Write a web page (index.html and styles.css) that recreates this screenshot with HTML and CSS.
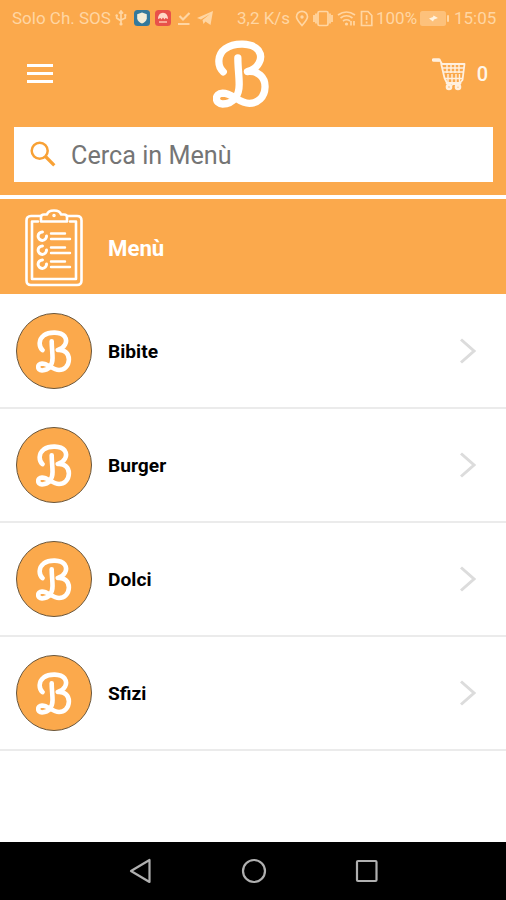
FILE: index.html
```
<!DOCTYPE html>
<html lang="it">
  <head>
    <meta charset="utf-8" />
    <title>Menù</title>
    <link rel="stylesheet" href="styles.css">
  </head>

  <body>
    <svg class="defs" width="0" height="0">
      <symbol id="logo" viewBox="14 12 172 203">
        <path d="M45 107C25 88 28 54 51 37C78 18 132 18 151 42C168 66 150 98 118 106C150 103 172 123 171 153C170 185 148 202 124 202C92 202 72 171 43 171C18 172 18 203 43 204C78 203 93 176 93 145C93 118 89 95 89 65" fill="none" stroke="#fff" stroke-width="22" stroke-linecap="round" stroke-linejoin="round" />
      </symbol>
      <symbol id="arrow" viewBox="0 0 16 26">
        <path d="M1 1.5L14 13L1 24.5" fill="none" stroke="#dcdcdc" stroke-width="3" />
      </symbol>
    </svg>

    <div id="status">
      <div class="status_side">
        <span class="operator">Solo Ch. SOS</span>
        <svg class="usb" width="12" height="16" viewBox="0 0 12 16">
          <path d="M6 2V14M6 11L1.7 8V5M6 10L10.3 8V4.5M4 3.5L6 1L8 3.5" />
          <circle class="solid" cx="6" cy="14" r="1.6" /><circle class="solid" cx="1.7" cy="5.5" r="1.2" /><path d="M9.3 5H11.3" />
        </svg>
        <svg class="shield" width="16" height="16" viewBox="0 0 16 16">
          <rect width="16" height="16" rx="3.5" fill="#34799b" />
          <path d="M8 2.6L12.8 4.3V8.5C12.5 11 10.5 12.5 8 13.5C5.5 12.5 3.5 11 3.2 8.5V4.3Z" fill="#f5eed7" />
        </svg>
        <svg class="huawei" width="16" height="16" viewBox="0 0 16 16">
          <rect width="16" height="16" rx="3.5" fill="#e8514a" />
          <path d="M3 9C3 5 5 3 8 2.7C11 3 13 5 13 9L10.5 8L9.5 9.5L8 7.5L6.5 9.5L5.5 8Z" fill="#ffd9c8" />
          <path class="line" d="M4 12H12" />
        </svg>
        <svg class="check" width="14" height="15" viewBox="0 0 14 15">
          <path d="M2.5 5L6 8.5L12.5 2M1 13H12.5" />
        </svg>
        <svg class="plane" width="16" height="14" viewBox="0 0 16 14">
          <path class="solid" d="M0 7L16 0L13.5 14L8.5 10.5L6.5 13L5.5 9L13 3L4 8.5Z" />
        </svg>
      </div>
      <div class="status_side">
        <span class="speed">3,2 K/s</span>
        <svg class="pin" width="14" height="17" viewBox="0 0 14 17">
          <path d="M7 15.5C4 12 1.5 9.5 1.5 6.8A5.5 5.5 0 0 1 12.5 6.8C12.5 9.5 10 12 7 15.5Z" />
          <circle class="solid" cx="7" cy="7" r="1.7" />
        </svg>
        <svg class="vibrate" width="20" height="17" viewBox="0 0 20 17">
          <rect x="5" y="1.5" width="10" height="14" rx="1.5" /><path d="M3 3.5V13.5M17 3.5V13.5M1 5V12M19 5V12" />
        </svg>
        <svg class="wifi" width="19" height="17" viewBox="0 0 19 17">
          <path d="M1 5Q9.5-1 18 5M3.5 8Q9.5 3.5 15.5 8M6 11Q9.5 8.5 13 11" />
          <circle class="solid" cx="9.5" cy="14" r="1.6" /><path d="M14 11V15.5M17 15.5V11" />
        </svg>
        <svg class="sim" width="13" height="17" viewBox="0 0 13 17">
          <path d="M1.5 1.5H8L11.8 5.5V15.5H1.5Z" /><path d="M6.6 5V10M6.6 11.5V13.5" />
        </svg>
        <span class="percent">100%</span>
        <svg class="battery" width="29" height="15" viewBox="0 0 29 15">
          <rect class="solid" width="26" height="15" rx="2.5" opacity=".55" /><rect class="solid" x="27" y="4" width="2" height="7" rx="1" />
          <path d="M9 7.5L13 6L13.5 4.5L18 7L14 8.5L13 10.5Z" fill="#fff3df" />
        </svg>
        <span class="clock">15:05</span>
      </div>
    </div>

    <div id="head">
      <svg class="burger" width="26" height="20" viewBox="0 0 26 20">
        <path d="M0 1.5H26M0 9.5H26M0 17.5H26" stroke="#fff" stroke-width="2.8" />
      </svg>
      <svg class="brand" width="57" height="68"><use href="#logo" /></svg>
      <div class="cart">
        <svg width="35" height="33" viewBox="0 0 35 33" fill="none" stroke="#fff0df">
          <path d="M1 2L8 2.5L10 6H32.5L30.5 22L28 25H15L12.5 20L9 5" stroke-width="1.8" stroke-linejoin="round" />
          <path d="M1.500 2H7" stroke-width="3.4" stroke-linecap="round" />
          <path d="M11 10H32M12 14H31.500M12.500 20.500H30.500M15 6V15M19 6V15M23 6V15M27 6V15M16 16V24M20 16V24M24 16V24M27.500 16V24" stroke-width="1.4" />
          <path d="M14 25L19 28L22 25L26 28L29 25" stroke-width="1.6" />
          <circle cx="17" cy="29" r="2" stroke-width="2.6" /><circle cx="26" cy="29" r="2" stroke-width="2.6" />
        </svg>
        <span>0</span>
      </div>
    </div>

    <form id="search" action="">
      <svg width="26" height="26" viewBox="0 0 26 26">
        <g fill="none" stroke="#f8a135"><circle cx="9.7" cy="9.7" r="8" stroke-width="2.5" /><path d="M15.5 15.5L24.3 24.3" stroke-width="3.2" /></g>
      </svg>
      <input class="query" placeholder="Cerca in Menù" autocomplete="off" />
    </form>

    <div id="title">
      <svg width="58" height="78" viewBox="0 0 58 78" fill="none" stroke="#fff" stroke-width="2.6" stroke-linejoin="round" stroke-linecap="round">
        <path d="M16 7H6Q1.5 7 1.5 11.5V71.5Q1.5 76 6 76H52Q56.5 76 56.5 71.5V11.5Q56.5 7 52 7H42" />
        <path d="M13 12.5H7V70H51V12.5H45" />
        <path d="M16 12.5V8Q16 5.5 19 5.5H22Q23 1.5 29 1.5Q35 1.5 36 5.5H39Q42 5.5 42 8V12.5Z" />
        <circle cx="29" cy="6.5" r="1" stroke-width="1.5" />
        <path d="M26 24.5H40M26 30H45M26 38.5H40M26 44H45M26 52.5H40M26 58H45" stroke-width="2.4" />
        <path d="M17.5 23A4.2 4.2 0 1 0 21.5 27M17.5 37A4.2 4.2 0 1 0 21.5 41M17.5 51A4.2 4.2 0 1 0 21.5 55" stroke-width="3" />
      </svg>
      <span>Menù</span>
    </div>

    <ul id="list">
      <li>
        <div class="avatar"><svg width="36" height="43"><use href="#logo" /></svg></div>
        <span>Bibite</span>
        <svg class="arrow" width="16" height="26"><use href="#arrow" /></svg>
      </li>
      <li>
        <div class="avatar"><svg width="36" height="43"><use href="#logo" /></svg></div>
        <span>Burger</span>
        <svg class="arrow" width="16" height="26"><use href="#arrow" /></svg>
      </li>
      <li>
        <div class="avatar"><svg width="36" height="43"><use href="#logo" /></svg></div>
        <span>Dolci</span>
        <svg class="arrow" width="16" height="26"><use href="#arrow" /></svg>
      </li>
      <li>
        <div class="avatar"><svg width="36" height="43"><use href="#logo" /></svg></div>
        <span>Sfizi</span>
        <svg class="arrow" width="16" height="26"><use href="#arrow" /></svg>
      </li>
    </ul>

    <div id="nav">
      <svg width="24" height="26" viewBox="0 0 24 26"><path d="M2 13L20.5 2V24Z" /></svg>
      <svg width="26" height="26" viewBox="0 0 26 26"><circle cx="13" cy="13" r="11" /></svg>
      <svg width="24" height="26" viewBox="0 0 24 26"><rect x="2" y="3" width="19.5" height="20" rx="1" /></svg>
    </div>
  </body>
</html>
```

FILE: styles.css
```
body {
  display: flex;
  flex-direction: column;
  height: 900px;
  margin: 0;
  background: #fff;
  font-family: Roboto, 'Liberation Sans', sans-serif;
}

svg {
  display: block;
  flex-shrink: 0;
}

.defs {
  display: none;
}

#status {
  display: flex;
  justify-content: space-between;
  height: 36px;
  padding: 0 10px 0 12px;
  background: #fba94c;
  color: #ffd6a3;
  font-size: 17px;
}

.status_side {
  display: flex;
  align-items: center;
}

.status_side span {
  white-space: nowrap;
}

.status_side svg {
  fill: none;
  stroke: #ffd6a3;
  stroke-width: 1.7;
}

.status_side .solid {
  fill: #ffd6a3;
  stroke: none;
}

.status_side rect[fill],
.status_side path[fill] {
  stroke: none;
}

.status_side .line {
  stroke: #ffc5ae;
  stroke-width: 1.5;
}

.operator {
  width: 103px;
}

.shield {
  margin-left: 7px;
}

.huawei {
  margin-left: 5px;
}

.status_side .check {
  margin-left: 6px;
  stroke-width: 2.2;
}

.plane {
  margin-left: 6px;
}

.speed {
  width: 58px;
}

.vibrate {
  margin-left: 4px;
}

.wifi {
  margin-left: 4px;
}

.sim {
  margin-left: 4px;
}

.percent {
  width: 41px;
  margin-left: 3px;
}

.battery {
  margin-left: 3px;
}

.clock {
  width: 42px;
  margin-left: 5px;
}

#head {
  display: grid;
  grid-template-columns: 186px 57px 1fr;
  align-items: center;
  height: 76px;
  padding: 0 18px 0 27px;
  background: #fba94c;
}

.cart {
  display: flex;
  align-items: center;
  justify-content: flex-end;
  gap: 10px;
  color: #fff6e9;
  font-size: 20px;
  font-weight: 500;
}

#search {
  display: flex;
  align-items: center;
  box-sizing: border-box;
  height: 83px;
  margin: 0;
  padding: 15px 13px 13px 14px;
  background: #fba94c;
}

#search svg {
  padding: 14px 0 15px 16px;
  background: #fff;
}

.query {
  box-sizing: border-box;
  flex-grow: 1;
  height: 55px;
  border: none;
  border-radius: 0;
  padding: 2px 15px 0;
  outline: none;
  background: #fff;
  font-family: inherit;
  font-size: 25.2px;
}

.query::placeholder {
  color: #757575;
}

#title {
  display: flex;
  align-items: center;
  box-sizing: border-box;
  gap: 25px;
  height: 95px;
  margin-top: 4px;
  padding: 2px 0 0 25px;
  background: #fba94c;
  color: #fff;
  font-size: 22.2px;
  font-weight: 700;
}

#list {
  flex-grow: 1;
  list-style-type: none;
  margin: 1px 0 0;
  padding: 0;
}

#list li {
  display: flex;
  align-items: center;
  box-sizing: border-box;
  height: 114px;
  border-bottom: 2px solid #ebebeb;
  padding: 0 30px 0 16px;
  font-size: 19.2px;
  font-weight: 700;
}

#list span {
  padding-top: 1px;
}

.avatar {
  display: flex;
  align-items: center;
  justify-content: center;
  box-sizing: border-box;
  width: 76px;
  height: 76px;
  margin-right: 16px;
  border: 1px solid #69563c;
  border-radius: 50%;
  background: #fba94c;
}

.arrow {
  margin-left: auto;
}

#nav {
  display: flex;
  align-items: center;
  justify-content: center;
  gap: 88px;
  height: 58px;
  padding-left: 1px;
  background: #000;
}

#nav svg {
  fill: none;
  stroke: #b0b0b0;
  stroke-width: 2.2;
  stroke-linejoin: round;
}
```
